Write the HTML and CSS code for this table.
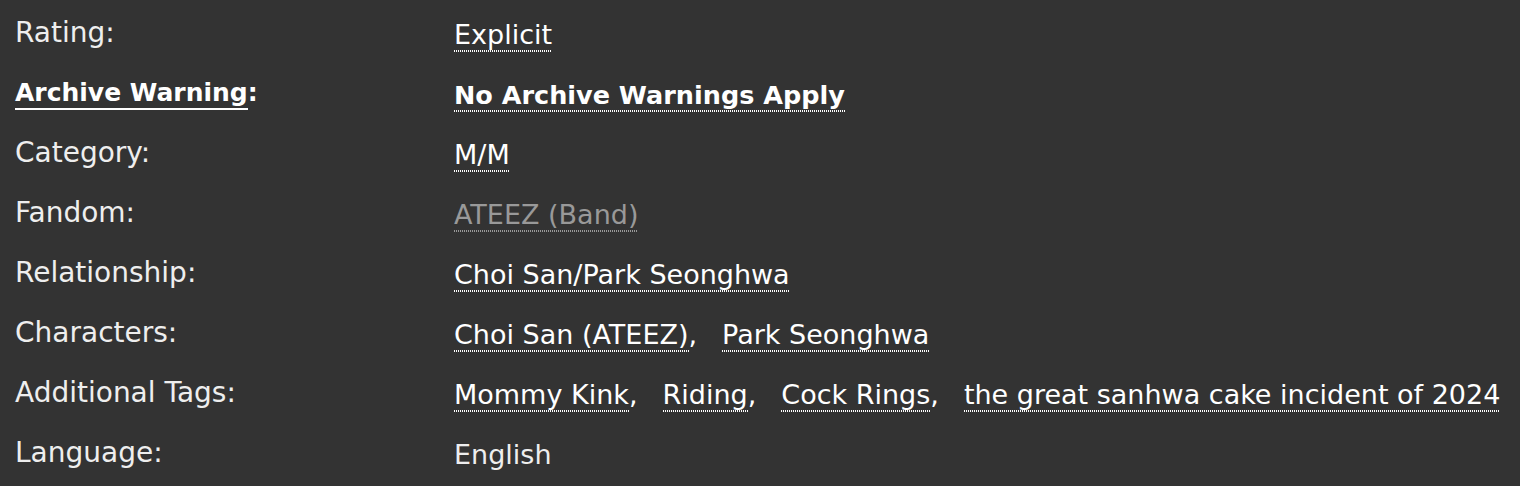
FILE: index.html
```html
<!DOCTYPE html>
<html>
<head>
<meta charset="utf-8">
<link rel="stylesheet" href="styles.css">
</head>
<body>
<dl class="meta">
  <dt>Rating:</dt>
  <dd><a class="tag">Explicit</a></dd>
  <dt class="warn"><a class="plain">Archive Warning</a>:</dt>
  <dd><a class="tag strong">No Archive Warnings Apply</a></dd>
  <dt>Category:</dt>
  <dd><a class="tag">M/M</a></dd>
  <dt>Fandom:</dt>
  <dd><a class="tag muted">ATEEZ (Band)</a></dd>
  <dt>Relationship:</dt>
  <dd><a class="tag">Choi San/Park Seonghwa</a></dd>
  <dt>Characters:</dt>
  <dd><span class="item"><a class="tag">Choi San (ATEEZ)</a>,</span><span class="item"><a class="tag">Park Seonghwa</a></span></dd>
  <dt>Additional Tags:</dt>
  <dd><span class="item"><a class="tag">Mommy Kink</a>,</span><span class="item"><a class="tag">Riding</a>,</span><span class="item"><a class="tag">Cock Rings</a>,</span><span class="item"><a class="tag">the great sanhwa cake incident of 2024</a></span></dd>
  <dt>Language:</dt>
  <dd class="lang">English</dd>
</dl>
</body>
</html>
```

FILE: styles.css
```css
html, body {
  margin: 0;
  padding: 0;
  background: #333333;
}
body {
  font-family: "DejaVu Sans", "Liberation Sans", sans-serif;
  font-size: 27.5px;
  color: #eeeeee;
  width: 1520px;
  height: 486px;
  overflow: hidden;
}
.meta {
  margin: 0;
  padding: 16px 0 0 15px;
  display: grid;
  grid-template-columns: 439px 1fr;
  grid-auto-rows: 60px;
}
dt {
  margin: 0;
  line-height: 1.2;
  white-space: nowrap;
  font-size: 28px;
}
dd {
  margin: 0;
  line-height: 1.2;
  padding-top: 3px;
  color: #ffffff;
  white-space: nowrap;
  font-size: 27px;
}
.item {
  margin-right: 25px;
}
.item:last-child {
  margin-right: 0;
}
.tag {
  color: #ffffff;
  text-decoration: none;
  padding-bottom: 2px;
  background-image: linear-gradient(to right, #ffffff 50%, transparent 50%);
  background-repeat: repeat-x;
  background-position: left bottom;
  background-size: 2px 2px;
}
.strong {
  font-weight: bold;
  font-size: 25.5px;
}
dt.warn {
  font-weight: bold;
  font-size: 25px;
  color: #ffffff;
  padding-top: 2px;
}
.warn .plain {
  color: #ffffff;
  text-decoration: none;
  padding-bottom: 1px;
  border-bottom: 2px solid #ffffff;
}
.muted {
  color: #999999;
  background-image: linear-gradient(to right, #999999 50%, transparent 50%);
}
.lang {
  color: #eeeeee;
}
```
